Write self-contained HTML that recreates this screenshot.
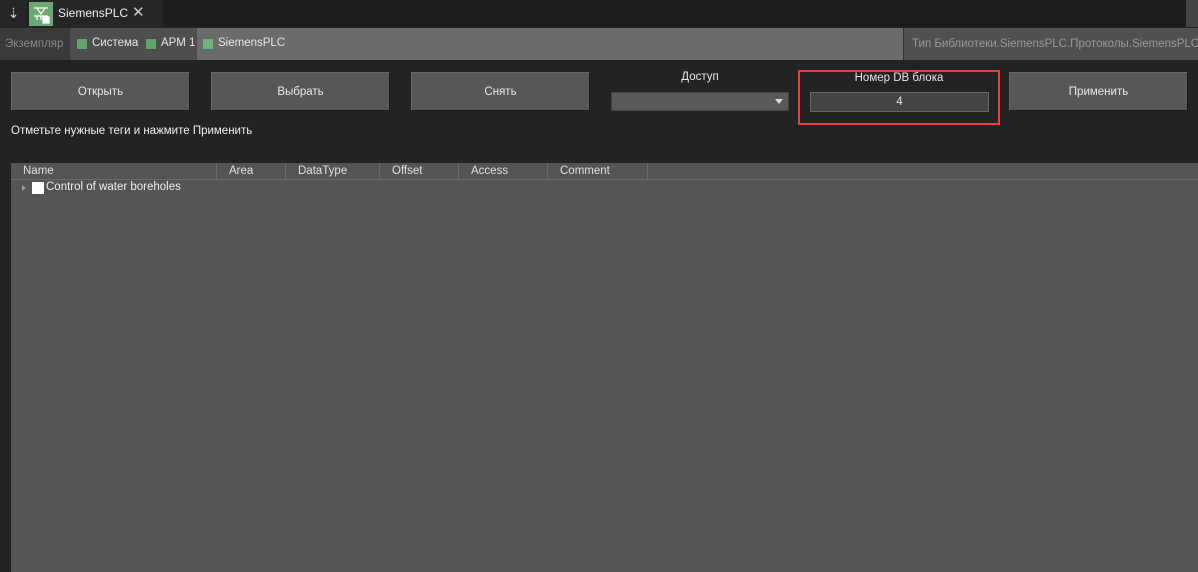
<!DOCTYPE html>
<html><head><meta charset="utf-8"><style>
*{margin:0;padding:0;box-sizing:border-box}
body{width:1198px;height:572px;background:#232323;font-family:"Liberation Sans",sans-serif;font-size:11.5px;color:#ddd;position:relative;overflow:hidden}
.a{position:absolute}
.btn{position:absolute;top:72px;height:39px;background:#575757;border:1px solid #1a1a1a;border-top-color:#666;border-left-color:#666;color:#e8e8e8;display:flex;align-items:center;justify-content:center;font-size:11.5px}
.hc{position:absolute;top:163px;height:16px;line-height:16px;border-right:1px solid #6a6a6a;padding-left:12px;color:#e0e0e0}
</style></head><body>
<div class="a" style="left:0;top:0;width:1198px;height:27px;background:#1c1c1c"></div>
<div class="a" style="left:0;top:0;width:27px;height:27px;background:#262626;color:#ccc;font-size:14px;text-align:center;line-height:26px">⇣</div>
<div class="a" style="left:28px;top:0;width:135px;height:27px;background:#262626"></div>
<div class="a" style="left:29px;top:2px;width:24px;height:24px;background:#6aa874"></div>
<svg class="a" style="left:31px;top:4px" width="20" height="20" viewBox="0 0 20 20" fill="none" stroke="#fff" stroke-width="1.2"><path d="M3 4h14M6 4l4 6 4-6M3 12h14M6 12v4M10 12v4"/><rect x="12" y="13" width="6" height="6" fill="#fff"/></svg>
<div class="a" style="left:58px;top:6px;color:#eee;font-size:12px">SiemensPLC</div>
<div class="a" style="left:132px;top:3px;color:#ccc;font-size:15px">✕</div>
<div class="a" style="left:1186px;top:0;width:12px;height:27px;background:#444"></div>
<div class="a" style="left:0;top:28px;width:70px;height:32px;background:#3a3a3a;color:#888;line-height:32px;padding-left:5px">Экземпляр</div>
<div class="a" style="left:70px;top:28px;width:127px;height:32px;background:#4e4e4e"></div>
<div class="a" style="left:197px;top:28px;width:706px;height:32px;background:#6b6b6b"></div>
<div class="a" style="left:903px;top:28px;width:295px;height:32px;background:#505050;border-left:1px solid #333;color:#999;line-height:32px;padding-left:8px;white-space:nowrap">Тип Библиотеки.SiemensPLC.Протоколы.SiemensPLC</div>
<div class="a" style="left:77px;top:39px;width:10px;height:10px;background:#64a26e"></div>
<div class="a" style="left:92px;top:37px;color:#e6e6e6">Система</div>
<div class="a" style="left:146px;top:39px;width:10px;height:10px;background:#64a26e"></div>
<div class="a" style="left:161px;top:37px;color:#e6e6e6">АРМ 1</div>
<div class="a" style="left:203px;top:39px;width:10px;height:10px;background:#6fb47a"></div>
<div class="a" style="left:218px;top:37px;color:#e6e6e6">SiemensPLC</div>
<div class="btn" style="left:11px;width:179px">Открыть</div>
<div class="btn" style="left:211px;width:179px">Выбрать</div>
<div class="btn" style="left:411px;width:179px">Снять</div>
<div class="a" style="left:611px;top:71px;width:178px;text-align:center;color:#e6e6e6">Доступ</div>
<div class="a" style="left:611px;top:92px;width:178px;height:19px;background:#595959;border:1px solid #444"></div>
<div class="a" style="left:775px;top:99px;width:0;height:0;border-left:4px solid transparent;border-right:4px solid transparent;border-top:5px solid #ddd"></div>
<div class="a" style="left:798px;top:70px;width:202px;height:55px;border:2px solid #e84040"></div>
<div class="a" style="left:798px;top:72px;width:202px;text-align:center;color:#e6e6e6">Номер DB блока</div>
<div class="a" style="left:810px;top:92px;width:179px;height:20px;background:#444;border:1px solid #666;text-align:center;line-height:18px;color:#e6e6e6">4</div>
<div class="btn" style="left:1009px;width:179px">Применить</div>
<div class="a" style="left:11px;top:125px;color:#f0f0f0">Отметьте нужные теги и нажмите Применить</div>
<div class="a" style="left:11px;top:163px;width:1187px;height:409px;background:#545454"></div>
<div class="a" style="left:11px;top:179px;width:1187px;height:1px;background:#6a6a6a"></div>
<div class="hc" style="left:11px;width:206px">Name</div>
<div class="hc" style="left:217px;width:69px">Area</div>
<div class="hc" style="left:286px;width:94px">DataType</div>
<div class="hc" style="left:380px;width:79px">Offset</div>
<div class="hc" style="left:459px;width:89px">Access</div>
<div class="hc" style="left:548px;width:100px">Comment</div>
<div class="a" style="left:22px;top:185px;width:0;height:0;border-top:3px solid transparent;border-bottom:3px solid transparent;border-left:4px solid #999"></div>
<div class="a" style="left:32px;top:182px;width:12px;height:12px;background:#fff"></div>
<div class="a" style="left:46px;top:181px;color:#eee">Control of water boreholes</div>
</body></html>
